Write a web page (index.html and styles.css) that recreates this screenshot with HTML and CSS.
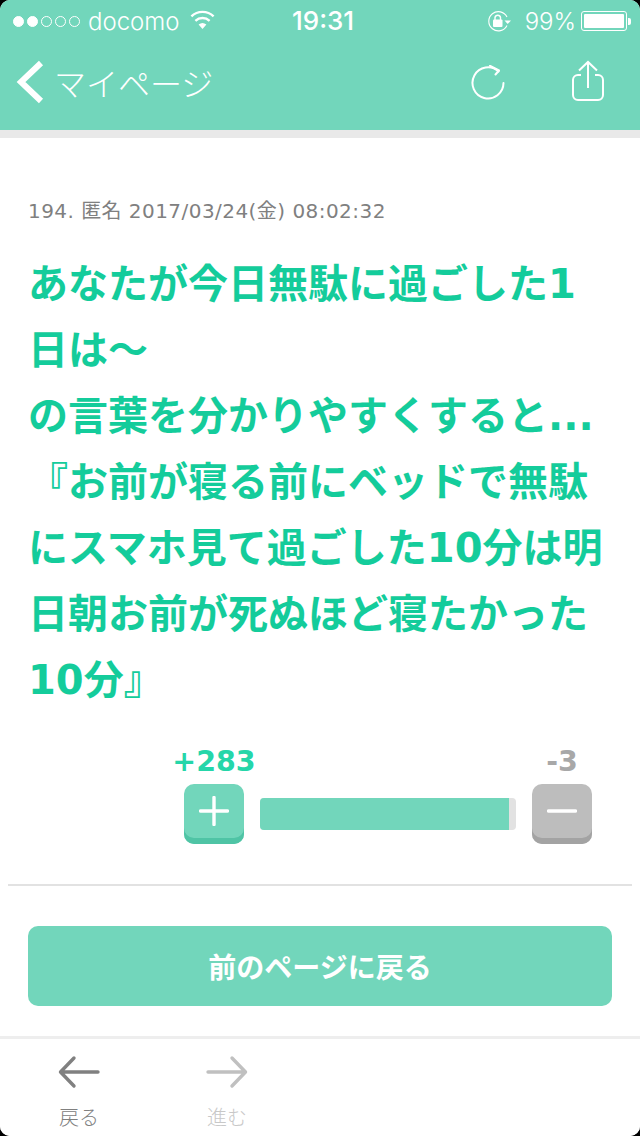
FILE: index.html
```html
<!DOCTYPE html>
<html lang="ja">
<head>
    <meta charset="UTF-8">
    <meta name="viewport" content="width=device-width, initial-scale=1.0">
    <title>マイページ</title>
    <link rel="stylesheet" href="styles.css">
</head>
<body>
    <div class="phone">
        <header class="top">
            <div class="status">
                <div class="status-left">
                    <span class="signal"><i class="on"></i><i class="on"></i><i></i><i></i><i></i></span>
                    <span class="carrier">docomo</span>
                    <svg class="wifi" width="25" height="20" viewBox="0 0 25 20">
                        <path d="M12.5 19 L8.6 14.6 A6 6 0 0 1 16.4 14.6 Z" fill="#fff"/>
                        <path d="M5.4 10.8 A10.4 10.4 0 0 1 19.6 10.8" fill="none" stroke="#fff" stroke-width="2.4"/>
                        <path d="M1.4 6.4 A16 16 0 0 1 23.6 6.4" fill="none" stroke="#fff" stroke-width="2.4"/>
                    </svg>
                </div>
                <div class="clock">19:31</div>
                <div class="status-right">
                    <svg class="lock" width="26" height="22" viewBox="0 0 26 22">
                        <path d="M20 15.5 A9.6 9.6 0 1 1 20 7" fill="none" stroke="#fff" stroke-width="1.1"/>
                        <path d="M17.5 10.5 H24 L20.7 14 Z" fill="#fff"/>
                        <rect x="6" y="9.5" width="9.5" height="7.5" rx="1" fill="#fff"/>
                        <path d="M8 10 V7.5 A2.8 2.8 0 0 1 13.5 7.5 V10" fill="none" stroke="#fff" stroke-width="1.4"/>
                    </svg>
                    <span class="percent">99%</span>
                    <span class="battery"><span class="battery-fill"></span></span>
                    <span class="battery-tip"></span>
                </div>
            </div>
            <nav class="nav">
                <a class="back">
                    <svg width="28" height="44" viewBox="0 0 28 44">
                        <path d="M25 3 L5 22 L25 41" fill="none" stroke="#fff" stroke-width="6"/>
                    </svg>
                    <span>マイページ</span>
                </a>
                <div class="nav-icons">
                    <svg class="reload" width="36" height="36" viewBox="0 0 36 36">
                        <path d="M28.5 6.5 A15.5 15.5 0 1 0 33.5 18" fill="none" stroke="#fff" stroke-width="2" stroke-linecap="round"/>
                        <path d="M20 0.8 L29 5.5 L25.5 9.5" fill="none" stroke="#fff" stroke-width="2" stroke-linecap="round" stroke-linejoin="round"/>
                    </svg>
                    <svg width="36" height="44" viewBox="0 0 36 44">
                        <path d="M11 15 H8 A5 5 0 0 0 3 20 V35 A5 5 0 0 0 8 40 H28 A5 5 0 0 0 33 35 V20 A5 5 0 0 0 28 15 H25" fill="none" stroke="#fff" stroke-width="2"/>
                        <path d="M18 28 V2 M9 10.5 L18 2 L27 10.5" fill="none" stroke="#fff" stroke-width="2"/>
                    </svg>
                </div>
            </nav>
        </header>

        <main class="content">
            <p class="meta">194. 匿名 2017/03/24(金) 08:02:32</p>
            <h1 class="comment">あなたが今日無駄に過ごした1日は〜<br>の言葉を分かりやすくすると...<br>『お前が寝る前にベッドで無駄にスマホ見て過ごした10分は明日朝お前が死ぬほど寝たかった10分』</h1>

            <div class="votes">
                <div class="vote">
                    <span class="count plus">+283</span>
                    <button class="vote-btn green">
                        <svg width="30" height="30" viewBox="0 0 30 30">
                            <path d="M15 1.5 V28.5 M1.5 15 H28.5" stroke="#fff" stroke-width="3.4" stroke-linecap="round"/>
                        </svg>
                    </button>
                </div>
                <div class="bar"><div class="bar-fill" style="width: 97.4%"></div></div>
                <div class="vote">
                    <span class="count minus">-3</span>
                    <button class="vote-btn grey">
                        <svg width="30" height="30" viewBox="0 0 30 30">
                            <path d="M1.5 15 H28.5" stroke="#fff" stroke-width="3.4" stroke-linecap="round"/>
                        </svg>
                    </button>
                </div>
            </div>

            <hr class="rule">
            <a class="return">前のページに戻る</a>
        </main>

        <footer class="toolbar">
            <div class="tool">
                <svg width="42" height="34" viewBox="0 0 42 34">
                    <path d="M40 17 H3 M16 3 L2.5 17 L16 31" fill="none" stroke="#808080" stroke-width="3.4" stroke-linecap="round" stroke-linejoin="round"/>
                </svg>
                <span>戻る</span>
            </div>
            <div class="tool off">
                <svg width="42" height="34" viewBox="0 0 42 34">
                    <path d="M2 17 H39 M26 3 L39.5 17 L26 31" fill="none" stroke="#c0c0c0" stroke-width="3.4" stroke-linecap="round" stroke-linejoin="round"/>
                </svg>
                <span>進む</span>
            </div>
        </footer>
    </div>
</body>
</html>
```

FILE: styles.css
```css
* {
    box-sizing: border-box;
}
body {
    margin: 0;
    background-color: #000;
    font-family: "Noto Sans CJK JP", "Noto Sans", sans-serif;
}
.phone {
    width: 640px;
    height: 1136px;
    display: flex;
    flex-direction: column;
    background-color: #fff;
    border-radius: 10px;
    overflow: hidden;
}
.top {
    height: 138px;
    flex: none;
    background-color: #72d6bb;
    border-bottom: 8px solid #e9e9e9;
    color: #fff;
}
.status {
    height: 42px;
    display: flex;
    align-items: center;
    justify-content: space-between;
    padding: 0 9px 0 13px;
    position: relative;
    font-family: "Inter", "Liberation Sans", sans-serif;
    font-size: 24px;
}
.status-left, .status-right {
    display: flex;
    align-items: center;
}
.signal {
    display: flex;
    gap: 3px;
}
.signal i {
    width: 11px;
    height: 11px;
    border: 1px solid #fff;
    border-radius: 50%;
}
.signal i.on {
    background-color: #fff;
}
.carrier {
    margin-left: 8px;
    font-weight: 300;
}
.wifi {
    margin-left: 10px;
    margin-bottom: 3px;
}
.clock {
    position: absolute;
    left: 292px;
    top: 5px;
    font-size: 26px;
    font-weight: 500;
}
.percent {
    margin-left: 12px;
    font-weight: 300;
}
.battery {
    width: 46px;
    height: 20px;
    margin-left: 5px;
    padding: 2px;
    border: 1px solid #fff;
    border-radius: 3px;
}
.battery-fill {
    display: block;
    height: 100%;
    background-color: #fff;
    border-radius: 1px;
}
.battery-tip {
    width: 3px;
    height: 7px;
    margin-left: 1px;
    background-color: #fff;
    border-radius: 0 2px 2px 0;
}
.nav {
    height: 88px;
    display: flex;
    align-items: center;
    justify-content: space-between;
    padding: 0 34px 8px 16px;
}
.back {
    display: flex;
    align-items: center;
    gap: 10px;
    font-size: 32px;
    font-weight: 300;
}
.nav-icons {
    display: flex;
    align-items: center;
    gap: 64px;
}
.reload {
    margin-top: 2px;
}
.content {
    flex: 1;
    padding: 0 8px;
}
.meta {
    margin: 60px 20px 0;
    font-family: "DejaVu Sans", "Noto Sans CJK JP", sans-serif;
    font-size: 20px;
    line-height: 26px;
    letter-spacing: 0.45px;
    color: #808080;
}
.comment {
    margin: 27px 20px 0;
    font-family: "DejaVu Sans", "Noto Sans CJK JP", sans-serif;
    font-size: 40px;
    line-height: 66px;
    font-weight: 700;
    color: #14cc9b;
}
.votes {
    display: flex;
    align-items: flex-end;
    justify-content: flex-end;
    gap: 16px;
    margin-top: 31px;
    padding-right: 40px;
}
.vote {
    width: 60px;
    display: flex;
    flex-direction: column;
    align-items: center;
}
.count {
    font-family: "DejaVu Sans", "Liberation Sans", sans-serif;
    font-size: 28.5px;
    line-height: 36px;
    font-weight: 700;
    white-space: nowrap;
}
.count.plus {
    color: #25d6a9;
}
.count.minus {
    color: #a8a8a8;
}
.vote-btn {
    width: 60px;
    height: 60px;
    margin-top: 4px;
    padding: 0 0 6px;
    border: 0;
    border-radius: 10px;
    display: flex;
    align-items: center;
    justify-content: center;
}
.vote-btn.green {
    background-color: #72d6bb;
    box-shadow: inset 0 -6px 0 #4fc4a5;
}
.vote-btn.grey {
    background-color: #bdbdbd;
    box-shadow: inset 0 -6px 0 #a3a3a3;
}
.bar {
    width: 256px;
    height: 32px;
    margin-bottom: 14px;
    background-color: #e2e2e2;
    border-radius: 4px;
    overflow: hidden;
}
.bar-fill {
    height: 100%;
    background-color: #72d6bb;
}
.rule {
    height: 2px;
    margin: 40px 0 0;
    border: 0;
    background-color: #e2e2e2;
}
.return {
    display: block;
    height: 80px;
    margin: 40px 20px 0;
    background-color: #72d6bb;
    border-radius: 10px;
    color: #fff;
    font-size: 28px;
    font-weight: 700;
    line-height: 80px;
    text-align: center;
}
.toolbar {
    height: 100px;
    flex: none;
    display: flex;
    gap: 106px;
    padding: 16px 0 0 58px;
    background-color: #fff;
    border-top: 3px solid #eee;
}
.tool {
    width: 42px;
    display: flex;
    flex-direction: column;
    align-items: center;
    font-size: 20px;
    line-height: 26px;
    color: #808080;
    white-space: nowrap;
}
.tool span {
    margin-top: 15px;
    font-weight: 300;
}
.tool.off {
    color: #c8c8c8;
}
```
